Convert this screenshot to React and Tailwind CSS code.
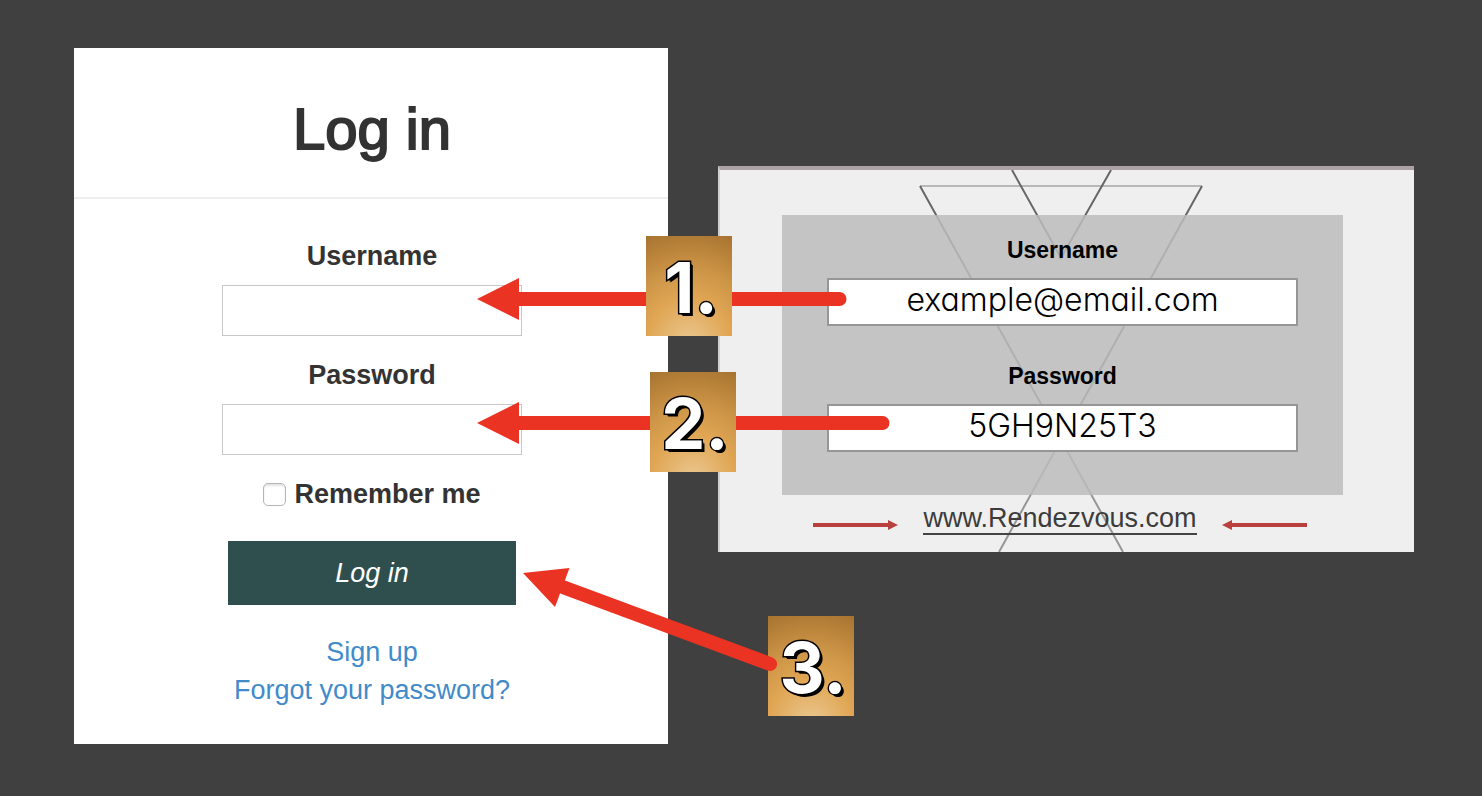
const BADGE =
  "absolute flex h-[100px] w-[86px] items-center justify-center bg-[radial-gradient(110px_120px_at_50%_108%,#ebc892_0%,#e0a654_38%,#cd9547_62%,#a5712e_100%)]";
const NUMBER =
  "pt-1 pl-1 font-['Inter',sans-serif] text-[70px] leading-[70px] font-bold text-white [-webkit-text-stroke:3px_#000] [paint-order:stroke_fill] [text-shadow:1px_1px_0_#000,2px_2px_0_#000,3px_3px_0_#000]";

function LoginField({ id, label, type }) {
  return (
    <div className="flex flex-col items-center gap-[10px]">
      <label htmlFor={id} className="font-bold">
        {label}
      </label>
      <input
        id={id}
        type={type}
        className="h-[51px] w-[300px] border border-[#c8c8c8] bg-white px-3 outline-none"
      />
    </div>
  );
}

function LoginCard() {
  return (
    <section className="bg-white pb-[35px] text-center text-[27px] leading-[38px] text-[#333]">
      <header className="border-b-2 border-[#eee] pt-[46px] pb-[33px] pl-[2px]">
        <h1 className="text-[58px] leading-[70px] [-webkit-text-stroke:2px_#333]">Log in</h1>
      </header>
      <form
        className="flex flex-col items-center pt-[38px] pl-[2px]"
        onSubmit={(e) => e.preventDefault()}
      >
        <div className="flex flex-col gap-5">
          <LoginField id="login-user" label="Username" type="text" />
          <LoginField id="login-pass" label="Password" type="password" />
          <div className="flex items-center justify-center gap-2">
            <input
              id="remember"
              type="checkbox"
              className="size-[23px] appearance-none rounded-[5px] border border-[#b5b5b5] bg-white shadow-[inset_0_2px_2px_#e4e4e4]"
            />
            <label htmlFor="remember" className="font-bold">
              Remember me
            </label>
          </div>
        </div>
        <button
          type="submit"
          className="mt-7 h-16 w-[288px] bg-[#2f4f4f] text-white italic"
        >
          Log in
        </button>
        <nav className="mt-7 flex flex-col items-center text-[#428bca]">
          <a href="#signup">Sign up</a>
          <a href="#forgot">Forgot your password?</a>
        </nav>
      </form>
    </section>
  );
}

function TicketField({ id, label, value }) {
  return (
    <div className="flex flex-col gap-[14px]">
      <label htmlFor={id} className="text-[23px] leading-7 font-bold text-black">
        {label}
      </label>
      <input
        id={id}
        type="text"
        readOnly
        value={value}
        className="h-12 w-full border-2 border-[#969696] bg-white pb-1 text-center font-['Inter',sans-serif] text-[32px] font-light text-black outline-none [font-feature-settings:'cv11']"
      />
    </div>
  );
}

function SmallArrow({ flip }) {
  return (
    <svg width="85" height="12" viewBox="0 0 85 12" aria-hidden="true" className="mt-3 shrink-0">
      <path
        d={flip ? "M85 4H10V1L0 6L10 11V8H85Z" : "M0 4H75V1L85 6L75 11V8H0Z"}
        fill="#b9403c"
      />
    </svg>
  );
}

function TicketCard() {
  return (
    <section className="relative border-t-4 border-l-2 border-t-[#aca2a5] border-l-[#d4cfd0] bg-[#efefef] pb-[17px] text-center">
      <svg
        className="absolute top-0 left-1/2 -translate-x-1/2"
        width="690"
        height="382"
        viewBox="722 170 690 382"
        fill="none"
        aria-hidden="true"
      >
        <path d="M920 186H1202" stroke="#b8b8b8" strokeWidth="2" />
        <path
          d="M920 186L1061 440M1202 186L1061 440M1012 170L1061 258L1111 170"
          stroke="#666"
          strokeWidth="2"
        />
        <path d="M1061 440L1123 552M1061 440L999 552" stroke="#969696" strokeWidth="2" />
      </svg>
      <div className="relative mt-[45px] mr-[71px] ml-[62px] flex flex-col gap-9 bg-[#bcbcbcd9] px-[45px] pt-[21px] pb-[43px]">
        <TicketField id="ticket-user" label="Username" value="example@email.com" />
        <TicketField id="ticket-pass" label="Password" value="5GH9N25T3" />
      </div>
      <div className="relative mt-2 mr-[14px] flex items-center justify-center gap-[25px]">
        <SmallArrow />
        <a
          href="#rendezvous"
          className="border-b-2 border-[#444] text-[27px] leading-[30px] text-[#3c3c3c]"
        >
          www.Rendezvous.com
        </a>
        <SmallArrow flip />
      </div>
    </section>
  );
}

function Annotations() {
  return (
    <div className="pointer-events-none absolute inset-0">
      <div className={`${BADGE} top-[616px] left-[768px]`} />
      <svg
        className="absolute top-0 left-0"
        width="1482"
        height="796"
        viewBox="0 0 1482 796"
        aria-hidden="true"
      >
        <g stroke="#ea3323" strokeWidth="14" strokeLinecap="round">
          <path d="M515 299H839.5" />
          <path d="M515 423H882.5" />
          <path d="M564 587.5L770 664" />
        </g>
        <g fill="#ea3323">
          <path d="M477 299L519 278V320Z" />
          <path d="M477 423L519 402V444Z" />
          <path d="M523 573L569.5 568L555 607Z" />
        </g>
      </svg>
      <div className={`${BADGE} top-[236px] left-[646px]`}>
        <span className={NUMBER}>1.</span>
      </div>
      <div className={`${BADGE} top-[372px] left-[650px]`}>
        <span className={NUMBER}>2.</span>
      </div>
      <div className="absolute top-[616px] left-[768px] flex h-[100px] w-[86px] items-center justify-center">
        <span className={NUMBER}>3.</span>
      </div>
    </div>
  );
}

export default function App() {
  return (
    <main className="relative min-h-screen bg-[#404040] font-['Liberation_Sans',Arial,sans-serif]">
      <div className="grid grid-cols-[594fr_696fr] items-start gap-[50px] pt-12 pr-[68px] pb-[52px] pl-[74px]">
        <LoginCard />
        <div className="pt-[118px]">
          <TicketCard />
        </div>
      </div>
      <Annotations />
    </main>
  );
}
